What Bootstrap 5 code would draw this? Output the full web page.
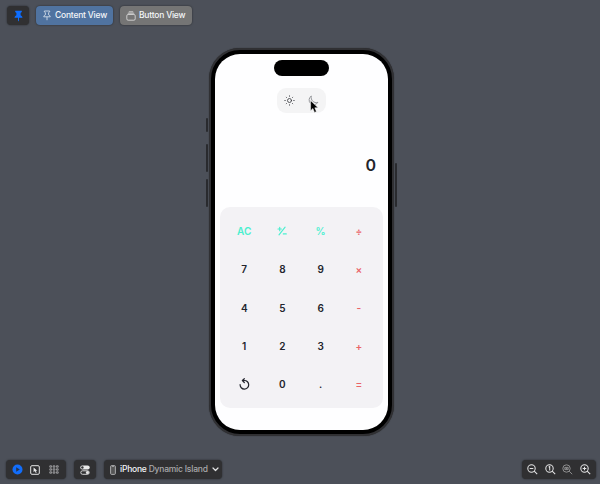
<!DOCTYPE html>
<html lang="en">
<head>
<meta charset="utf-8">
<meta name="viewport" content="width=device-width, initial-scale=1">
<title>Calculator preview</title>
<link href="https://cdn.jsdelivr.net/npm/bootstrap@5.3.0/dist/css/bootstrap.min.css" rel="stylesheet">
<style>
body{height:484px;background:#4c5059;font-family:Inter,"Liberation Sans",sans-serif;overflow:hidden;color:#e4e4e5}
svg{display:block;flex:none}
.topbar{height:48px;padding:6px 7px 0}
.tool{height:19px;border:0;border-radius:4px;font-size:8.5px;line-height:1;font-weight:500;letter-spacing:-.22px;box-shadow:0 0 2px rgba(0,0,0,.55);color:#f3f5f8;white-space:nowrap}
.tool:hover{color:#fff}
.tool-dark,.tool-dark:hover{background:#303032}
.tool-blue,.tool-blue:hover{background:#5073a0}
.tool-gray,.tool-gray:hover{background:#757575}
.phone{width:185px;height:388px;margin-left:209px;padding:4px;border-radius:31px;background:#000;border:2px solid #303033;box-shadow:0 0 1px #222}
.screen{height:100%;border-radius:25px;background:#fefeff;padding:6px 5px 0;color:#22242c}
.island{width:55px;height:16px;border-radius:8px;background:#000;margin-bottom:12px}
.mode{width:49px;height:25px;border-radius:9px;background:#f4f4f5;padding-left:7px;padding-right:7px}
.result{height:94px;padding:42px 7px 0;font-size:16px;font-weight:600;line-height:20px;text-align:right}
.keys{display:grid;grid-template-columns:repeat(4,38.2px);grid-template-rows:repeat(5,38.2px);justify-content:center;align-content:center;height:201px;border-radius:10px;background:#f3f2f5;font-size:10px;font-weight:600;place-items:center}
.key{width:30px;height:30px;padding:0;border:0;background:none;color:inherit;font:inherit;line-height:30px}
.fn{color:#4aefcf}
.op{color:#ea6467;font-weight:600}
.side{width:2px;background:#292a2e;border-radius:1px}
.bottombar{padding:24px 4px 0 6px}
.dim{color:#a9a9ab}
</style>
<script src="https://cdn.jsdelivr.net/npm/bootstrap@5.3.0/dist/js/bootstrap.bundle.min.js"></script>
</head>
<body class="d-flex flex-column">
<header class="topbar d-flex align-items-start">
  <button class="tool tool-dark btn p-0 d-flex align-items-center justify-content-center" style="width:22px" aria-label="Pin">
    <svg width="9" height="12" viewBox="0 0 9 12"><path d="M1.200.8h6.600v1.300L6.600 3v2.300c1 .5 1.800 1.200 1.900 2.500H5v2.800l-.5.9-.5-.9V7.800H.5C.6 6.500 1.400 5.800 2.400 5.300V3L1.200 2.100z" fill="#0d6dff"/></svg>
  </button>
  <button class="tool tool-blue btn p-0 d-flex align-items-center" style="width:77px;margin-left:7px;padding-left:7px!important">
    <svg width="8" height="11" viewBox="0 0 8 11" fill="none" stroke="#dfe7f0" stroke-width=".8"><path d="M1.300 1h5.400v.8l-1.100.8v2.200c.9.4 1.600 1 1.700 2H.7c.1-1 .8-1.600 1.700-2V2.600l-1.100-.8zM4 6.800v3.400"/></svg>
    <span class="ms-1">Content View</span>
  </button>
  <button class="tool tool-gray btn p-0 d-flex align-items-center" style="width:72px;margin-left:7px;padding-left:6px!important">
    <svg width="10" height="10" viewBox="0 0 10 10" fill="none" stroke="#e2e2e2" stroke-width=".8"><rect x=".8" y="3.500" width="8.400" height="5.700" rx="1.300"/><path d="M1.800 2.200h6.400M2.800.8h4.400"/></svg>
    <span style="margin-left:3px">Button View</span>
  </button>
</header>
<main class="position-relative">
  <div class="side position-absolute" style="left:206px;top:70px;height:14px"></div>
  <div class="side position-absolute" style="left:206px;top:96px;height:28px"></div>
  <div class="side position-absolute" style="left:206px;top:131px;height:28px"></div>
  <div class="side position-absolute" style="left:395px;top:115px;height:44px"></div>
  <section class="phone">
    <div class="screen">
      <div class="island mx-auto"></div>
      <div class="mode mx-auto d-flex align-items-center justify-content-between position-relative">
        <svg width="11" height="11" viewBox="0 0 11 11" fill="none" stroke="#3d3e44" stroke-width=".85" stroke-linecap="round"><circle cx="5.500" cy="5.500" r="2"/><path d="M5.500.8v.5M5.500 9.700v.5M.8 5.500h.5M9.700 5.500h.5M2.200 2.200l.3.300M8.500 8.500l.3.300M2.200 8.800l.3-.3M8.500 2.500l.3-.3"/></svg>
        <svg width="11" height="11" viewBox="0 0 11 11" fill="none" stroke="#77787d" stroke-width=".75"><path d="M3.300 1A4.700 4.700 0 1 0 9.900 7.300C6 8.600 2.400 5.300 3.300 1z"/></svg>
        <svg class="position-absolute" style="left:32px;top:12px" width="11" height="14" viewBox="0 0 11 14"><path d="M1.600.6v10.100l2.300-2.200 1.600 3.900 1.900-.8-1.600-3.800h3.300z" fill="#000" stroke="#fff" stroke-width=".5"/></svg>
      </div>
      <div class="result"><span>0</span></div>
      <div class="keys">
        <button class="key fn">AC</button>
        <button class="key fn d-flex align-items-center justify-content-center" aria-label="Plus minus"><svg width="10" height="10" viewBox="0 0 10 10" fill="none" stroke="#4aefcf" stroke-width="1.150" stroke-linecap="round"><path d="M1 3h3.400M2.700 1.300v3.400M8.100 1.200L2 8.800M6.300 7.900h3"/></svg></button>
        <button class="key fn">%</button><button class="key op">÷</button>
        <button class="key">7</button><button class="key">8</button><button class="key">9</button><button class="key op">×</button>
        <button class="key">4</button><button class="key">5</button><button class="key">6</button><button class="key op">-</button>
        <button class="key">1</button><button class="key">2</button><button class="key">3</button><button class="key op">+</button>
        <button class="key d-flex align-items-center justify-content-center" aria-label="Undo"><svg width="11" height="12" viewBox="0 0 11 12" fill="none" stroke="#22242c" stroke-width="1.200" stroke-linecap="round" stroke-linejoin="round"><path d="M1.100 6.600A4.300 4.300 0 1 0 5.400 2.500H3.600M5.300.7L3.400 2.500l1.900 2"/></svg></button>
        <button class="key">0</button><button class="key">.</button><button class="key op">=</button>
      </div>
    </div>
  </section>
</main>
<footer class="bottombar d-flex align-items-start">
  <div class="tool tool-dark d-flex align-items-center" style="width:60px;padding-left:6px">
    <svg width="11" height="11" viewBox="0 0 11 11"><circle cx="5.500" cy="5.500" r="5" fill="#126dfa"/><path d="M4.200 3.300v4.400l3.600-2.200z" fill="#26344d"/></svg>
    <svg style="margin-left:7px" width="10" height="10" viewBox="0 0 10 10"><rect x=".7" y=".7" width="8.600" height="8.600" rx="1.200" fill="none" stroke="#e5e5e5" stroke-width="1"/><path d="M3.600 2.400v4.800l1.300-1.100.9 1.800.9-.5-.9-1.700h1.500z" fill="#eee"/></svg>
    <svg style="margin-left:9px" width="10" height="9" viewBox="0 0 10 9" fill="none" stroke="#a8a8aa" stroke-width=".85"><path d="M.8.800h1.800v1.400H.8zM4.100.8h1.800v1.400H4.100zM7.400.8h1.800v1.400H7.400zM.8 3.800h1.800v1.400H.8zM4.100 3.800h1.800v1.400H4.100zM7.400 3.800h1.800v1.400H7.400zM.8 6.800h1.800v1.400H.8zM4.100 6.800h1.800v1.400H4.100zM7.400 6.800h1.800v1.400H7.400z"/></svg>
  </div>
  <div class="tool tool-dark d-flex align-items-center justify-content-center" style="width:22px;margin-left:8px">
    <svg width="10" height="10" viewBox="0 0 10 10"><rect x=".3" y=".5" width="9.400" height="4" rx="2" fill="#e7e7e7"/><circle cx="2.400" cy="2.500" r="1.200" fill="#303032"/><rect x=".8" y="5.800" width="8.400" height="3.500" rx="1.700" fill="none" stroke="#e7e7e7" stroke-width=".9"/><circle cx="7.400" cy="7.500" r="1.500" fill="#e7e7e7"/></svg>
  </div>
  <div class="tool tool-dark d-flex align-items-center" style="width:118px;margin-left:8px;padding-left:6px">
    <svg width="6" height="10" viewBox="0 0 6 10"><rect x=".6" y=".6" width="4.800" height="8.800" rx="1" fill="#555" stroke="#c4c4c5" stroke-width=".8"/><path d="M2.200 1.500h1.600" stroke="#ddd" stroke-width=".6"/></svg>
    <span style="margin-left:4px">iPhone <span class="dim">Dynamic Island</span></span>
    <svg style="margin-left:4px" width="7" height="5" viewBox="0 0 7 5" fill="none" stroke="#e4e4e5" stroke-width="1.200" stroke-linecap="round" stroke-linejoin="round"><path d="M1 1l2.500 2.500L6 1"/></svg>
  </div>
  <div class="tool tool-dark ms-auto d-flex align-items-center justify-content-between" style="width:74px;padding:0 5px">
    <svg width="11" height="11" viewBox="0 0 11 11" fill="none" stroke="#e4e4e5" stroke-width="1.050"><circle cx="4.500" cy="4.500" r="3.700"/><path d="M7.200 7.200l3 3M2.700 4.500h3.600"/></svg>
    <svg width="11" height="11" viewBox="0 0 11 11" fill="none" stroke="#e4e4e5" stroke-width="1.050"><circle cx="4.500" cy="4.500" r="3.700"/><path d="M7.200 7.200l3 3M3.700 3.300l1-.7v3.900"/></svg>
    <svg width="11" height="11" viewBox="0 0 11 11" fill="none" stroke="#929294" stroke-width=".95"><circle cx="4.500" cy="4.500" r="3.700"/><path d="M7.200 7.200l3 3M2.800 3.400h3.400v2.200H2.800zM3.600 4.500h1.800"/></svg>
    <svg width="11" height="11" viewBox="0 0 11 11" fill="none" stroke="#e4e4e5" stroke-width="1.050"><circle cx="4.500" cy="4.500" r="3.700"/><path d="M7.200 7.200l3 3M2.700 4.500h3.600M4.500 2.700v3.600"/></svg>
  </div>
</footer>
</body>
</html>
